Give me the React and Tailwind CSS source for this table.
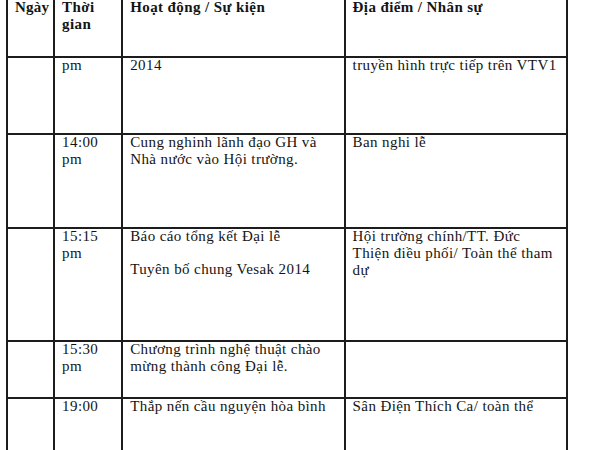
const rows = [
  {
    h: 'h-[77px]',
    time: ['pm'],
    activity: [['2014']],
    place: ['truyền hình trực tiếp trên VTV1'],
  },
  {
    h: 'h-[94px]',
    time: ['14:00', 'pm'],
    activity: [['Cung nghinh lãnh đạo GH và', 'Nhà nước vào Hội trường.']],
    place: ['Ban nghi lễ'],
  },
  {
    h: 'h-[113px]',
    time: ['15:15', 'pm'],
    activity: [['Báo cáo tổng kết Đại lễ'], ['Tuyên bố chung Vesak 2014']],
    place: ['Hội trường chính/TT. Đức', 'Thiện điều phối/ Toàn thể tham', 'dự'],
  },
  {
    h: 'h-[57px]',
    time: ['15:30', 'pm'],
    activity: [['Chương trình nghệ thuật chào', 'mừng thành công Đại lễ.']],
    place: [],
  },
  {
    h: 'h-[70px]',
    time: ['19:00'],
    activity: [['Thắp nến cầu nguyện hòa bình']],
    place: ['Sân Điện Thích Ca/ toàn thể'],
  },
]

const CELL = 'border-2 border-[#1c1c1c] align-top px-[7px] pt-0 whitespace-nowrap'

// Từng dòng tách sẵn để ngắt dòng giống bản gốc
function Lines({ lines }) {
  return (
    <div className="-mt-[1px]">
      {lines.map((l, i) => (
        <div key={i}>{l}</div>
      ))}
    </div>
  )
}

export default function App() {
  return (
    <div
      className="h-[450px] w-[600px] overflow-hidden bg-white text-[15px] leading-[17px] tracking-[0.4px] text-[#141414]"
      style={{ fontFamily: '"Liberation Serif", "Times New Roman", serif' }}
    >
      <table className="-mt-[2px] ml-[6px] w-[562px] table-fixed border-collapse">
        <colgroup>
          <col className="w-[47px]" />
          <col className="w-[68px]" />
          <col className="w-[222px]" />
          <col className="w-[222px]" />
        </colgroup>
        <thead>
          <tr className="h-[58px] font-bold">
            <th className={`${CELL} px-[4px] text-left tracking-[0.2px]`}>
              <Lines lines={['Ngày']} />
            </th>
            <th className={`${CELL} text-left`}>
              <Lines lines={['Thời', 'gian']} />
            </th>
            <th className={`${CELL} text-left`}>
              <Lines lines={['Hoạt động / Sự kiện']} />
            </th>
            <th className={`${CELL} text-left`}>
              <Lines lines={['Địa điểm / Nhân sự']} />
            </th>
          </tr>
        </thead>
        <tbody>
          {rows.map((r, i) => (
            <tr key={i} className={r.h}>
              <td className={CELL}></td>
              <td className={CELL}>
                <Lines lines={r.time} />
              </td>
              <td className={CELL}>
                {r.activity.map((p, j) => (
                  <div key={j} className={j > 0 ? 'mt-[17px]' : ''}>
                    <Lines lines={p} />
                  </div>
                ))}
              </td>
              <td className={CELL}>
                <Lines lines={r.place} />
              </td>
            </tr>
          ))}
        </tbody>
      </table>
    </div>
  )
}
